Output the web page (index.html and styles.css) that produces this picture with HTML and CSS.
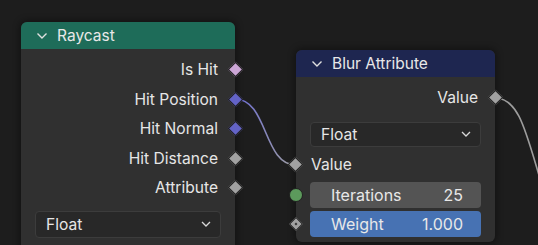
FILE: index.html
```html
<!DOCTYPE html>
<html lang="en">
<head>
  <meta charset="UTF-8" />
  <title>Node Editor</title>
  <link rel="stylesheet" href="styles.css">
</head>
<body>

  <div class="canvas">

    <!-- links between sockets -->
    <svg class="links" width="538" height="245" viewBox="0 0 538 245">
      <defs>
        <linearGradient id="vecToFloat" x1="235" y1="0" x2="296" y2="0" gradientUnits="userSpaceOnUse">
          <stop offset="0" stop-color="#6b6bd6" />
          <stop offset="1" stop-color="#a0a0a0" />
        </linearGradient>
      </defs>
      <path d="M235 99 C 268 99, 263 165, 296 165" stroke="url(#vecToFloat)" stroke-width="1.6" fill="none" />
      <path d="M495 98 C 525 98, 528 150, 555 225" stroke="#9d9d9d" stroke-width="1.6" fill="none" />
    </svg>

    <!-- Raycast node -->
    <div class="node node-raycast">
      <div class="node-header">
        <svg class="chevron" width="12" height="8" viewBox="0 0 12 8"><path d="M1.5 1.5 L6 6 L10.5 1.5" stroke="#e0e0e0" stroke-width="1.4" fill="none" /></svg>
        <span>Raycast</span>
      </div>
      <div class="node-body">
        <div class="row out">Is Hit<i class="socket diamond bool"></i></div>
        <div class="row out">Hit Position<i class="socket diamond vector"></i></div>
        <div class="row out">Hit Normal<i class="socket diamond vector"></i></div>
        <div class="row out">Hit Distance<i class="socket diamond float"></i></div>
        <div class="row out">Attribute<i class="socket diamond float"></i></div>
        <div class="dropdown tall">
          <span>Float</span>
          <svg width="10" height="6" viewBox="0 0 10 6"><path d="M1 1 L5 5 L9 1" stroke="#d8d8d8" stroke-width="1.3" fill="none" /></svg>
        </div>
      </div>
    </div>

    <!-- Blur Attribute node -->
    <div class="node node-blur">
      <div class="node-header">
        <svg class="chevron" width="12" height="8" viewBox="0 0 12 8"><path d="M1.5 1.5 L6 6 L10.5 1.5" stroke="#e0e0e0" stroke-width="1.4" fill="none" /></svg>
        <span>Blur Attribute</span>
      </div>
      <div class="node-body">
        <div class="row out">Value<i class="socket diamond float"></i></div>
        <div class="dropdown">
          <span>Float</span>
          <svg width="10" height="6" viewBox="0 0 10 6"><path d="M1 1 L5 5 L9 1" stroke="#d8d8d8" stroke-width="1.3" fill="none" /></svg>
        </div>
        <div class="row in"><i class="socket diamond float"></i>Value</div>
        <div class="field">
          <i class="socket circle int"></i>
          <span>Iterations</span><span>25</span>
        </div>
        <div class="field active">
          <i class="socket diamond dot"></i>
          <span>Weight</span><span>1.000</span>
        </div>
      </div>
    </div>

  </div>

</body>
</html>
```

FILE: styles.css
```css
* {
  margin: 0;
  padding: 0;
  box-sizing: border-box;
}

body, html {
  width: 538px;
  height: 245px;
  overflow: hidden;
  background: #1d1d1d;
  font-family: Inter, "Noto Sans", sans-serif;
  color: #e6e6e6;
}

.canvas {
  position: relative;
  width: 538px;
  height: 245px;
  overflow: hidden;
}

.links {
  position: absolute;
  left: 0;
  top: 0;
}

/* Nodes */

.node {
  position: absolute;
  background: #303030;
  border-radius: 6px;
  box-shadow: 0 0 6px 2px rgba(0, 0, 0, 0.35);
  display: flex;
  flex-direction: column;
}

.node-raycast {
  left: 21px;
  top: 22px;
  width: 214px;
  height: 240px;
}

.node-blur {
  left: 296px;
  top: 50px;
  width: 199px;
  height: 192px;
}

.node-header {
  height: 27px;
  border-radius: 6px 6px 0 0;
  display: flex;
  align-items: center;
  gap: 9px;
  padding-left: 15px;
  font-size: 15.5px;
  color: #e8e8e8;
}

.node-raycast .node-header {
  background: #1e6c59;
}

.node-blur .node-header {
  background: #1e2650;
}

.chevron {
  flex: none;
  margin-top: 1px;
}

.node-body {
  display: flex;
  flex-direction: column;
  padding: 6px 14px 5px 14px;
}

.row {
  position: relative;
  height: 29.5px;
  display: flex;
  align-items: center;
  font-size: 15.6px;
}

.row.out {
  justify-content: flex-end;
  padding-right: 3px;
}

.row.in {
  padding-left: 1px;
}

/* Sockets */

.socket {
  position: absolute;
  top: 50%;
  display: block;
}

.diamond {
  width: 11px;
  height: 11px;
  margin-top: -5.5px;
  transform: rotate(45deg);
  border: 1px solid #202020;
}

.row.out .socket {
  right: -20px;
}

.row.in .socket {
  left: -20px;
}

.bool { background: #cca6d6; }
.vector { background: #6363c7; }
.float { background: #a1a1a1; }

.circle {
  width: 14px;
  height: 14px;
  margin-top: -7px;
  border-radius: 50%;
  border: 1px solid #202020;
}

.int {
  background: #5c9a5c;
}

.dot {
  background: #a1a1a1;
  width: 10px;
  height: 10px;
  margin-top: -5px;
}

.dot::after {
  content: "";
  position: absolute;
  left: 3px;
  top: 3px;
  width: 2px;
  height: 2px;
  background: #303030;
}

/* Widgets */

.dropdown {
  height: 25px;
  margin-top: 9px;
  margin-bottom: 3px;
  background: #282828;
  border: 1px solid #3c3c3c;
  border-radius: 4px;
  display: flex;
  align-items: center;
  justify-content: space-between;
  padding: 0 9px 0 10px;
  font-size: 15.6px;
}

.dropdown.tall {
  height: 27px;
  margin-top: 8px;
}

.field {
  position: relative;
  height: 26px;
  margin-top: 3px;
  background: #545454;
  border-radius: 4px;
  display: flex;
  align-items: center;
  justify-content: space-between;
  padding: 0 18px 0 21px;
  font-size: 16px;
  color: #e8e8e8;
}

.field.active {
  background: #4772b3;
}

.field .circle {
  left: -21px;
}

.field .dot {
  left: -19px;
}
```
